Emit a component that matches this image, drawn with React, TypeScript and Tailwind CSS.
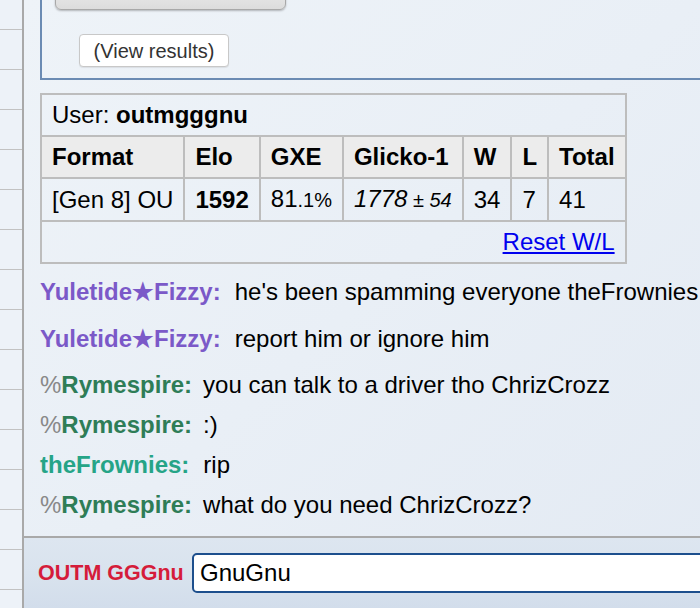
const messages = [
  { group: "", name: "Yuletide★Fizzy", color: "text-[#7b59c8]", text: "he's been spamming everyone theFrownies", tall: true },
  { group: "", name: "Yuletide★Fizzy", color: "text-[#7b59c8]", text: "report him or ignore him", tall: true },
  { group: "%", name: "Rymespire", color: "text-[#2e7d57]", text: "you can talk to a driver tho ChrizCrozz", tall: false },
  { group: "%", name: "Rymespire", color: "text-[#2e7d57]", text: ":)", tall: false },
  { group: "", name: "theFrownies", color: "text-[#25a487]", text: "rip", tall: false },
  { group: "%", name: "Rymespire", color: "text-[#2e7d57]", text: "what do you need ChrizCrozz?", tall: false },
];

const headers = ["Format", "Elo", "GXE", "Glicko-1", "W", "L", "Total"];

const cell = "border-2 border-[#bdbdbd] px-[10px] py-[6px]";

const RankTable = () => {
  return (
    <table className="mt-[13px] ml-[16px] border-collapse text-left">
      <tbody>
        <tr>
          <td colSpan={7} className={cell}>
            User: <strong>outmgggnu</strong>
          </td>
        </tr>
        <tr>
          {headers.map((h) => (
            <th key={h} className={`${cell} bg-[#ececec] font-bold`}>
              {h}
            </th>
          ))}
        </tr>
        <tr>
          <td className={cell}>[Gen 8] OU</td>
          <td className={cell}>
            <strong>1592</strong>
          </td>
          <td className={cell}>
            81<small className="text-[20px]">.1%</small>
          </td>
          <td className={cell}>
            <em>
              1778<small className="text-[20px]"> ± 54</small>
            </em>
          </td>
          <td className={cell}>34</td>
          <td className={cell}>7</td>
          <td className={cell}>41</td>
        </tr>
        <tr>
          <td colSpan={7} className={`${cell} text-right`}>
            <a href="#" className="text-[#0000ee] underline">
              Reset W/L
            </a>
          </td>
        </tr>
      </tbody>
    </table>
  );
};

const App = () => {
  return (
    <div className="flex h-[608px] w-[700px] overflow-hidden font-['Liberation_Sans',Arial,sans-serif] text-[24px] leading-[28px] text-black">
      {/* room list strip */}
      <aside className="w-[24px] shrink-0 border-r-2 border-[#a9a9a9] bg-[#edf2f8]">
        <div className="h-[30px] border-b border-[#c2c2c2]" />
        {Array.from({ length: 15 }).map((_, i) => (
          <div key={i} className="h-[40px] border-b border-[#c2c2c2]" />
        ))}
      </aside>

      <main className="flex min-w-0 flex-1 flex-col bg-gradient-to-br from-[#eef3f8] via-[#e9eff6] to-[#e3eaf3]">
        <div className="flex-1 overflow-hidden">
          {/* poll box */}
          <div className="ml-[16px] mr-[-40px] border-2 border-t-0 border-[#6b8bb3] pb-[11px]">
            <button className="mt-[-24px] ml-[13px] block h-[34px] w-[231px] rounded-[6px] border border-[#a8a8a8] bg-gradient-to-b from-[#f2f2f2] to-[#dcdcdc] pb-[12px] text-[20px] leading-[24px] text-[#333] shadow-[0_1px_2px_rgba(0,0,0,0.25)]">
              (Vote for your choice))
            </button>
            <button className="mt-[24px] ml-[37px] block h-[33px] w-[150px] rounded-[4px] border border-[#c8c8c8] bg-white text-[20px] leading-[24px] text-[#333] shadow-[0_1px_1px_rgba(0,0,0,0.08)]">
              (View results)
            </button>
          </div>

          <RankTable />

          {/* chat log */}
          <div className="mt-[7px] pl-[16px]">
            {messages.map((m, i) => (
              <div
                key={i}
                className={`whitespace-nowrap ${m.tall ? "pt-[7px] pb-[12px]" : "py-[6px]"}`}
              >
                {m.group && <span className="text-[#888]">{m.group}</span>}
                <strong className={m.color}>{m.name}:</strong>
                <span className={m.group ? "pl-[11px]" : "pl-[14px]"}>{m.text}</span>
              </div>
            ))}
          </div>
        </div>

        {/* compose bar */}
        <div className="flex h-[72px] shrink-0 items-center border-t-2 border-[#a9a9a9] bg-gradient-to-b from-[#dde6f0] via-[#d9e3ee] to-[#d2ddeb] pl-[14px]">
          <div className="w-[154px] shrink-0 text-[21.5px] font-bold text-[#d51c3a]">OUTM GGGnu</div>
          <input
            readOnly
            defaultValue="GnuGnu"
            className="mr-[-30px] h-[40px] min-w-0 flex-1 rounded-[5px] border-2 border-[#1d4f8d] bg-white px-[6px] text-[24px] text-black outline-none"
          />
        </div>
      </main>
    </div>
  );
};

export default App;
